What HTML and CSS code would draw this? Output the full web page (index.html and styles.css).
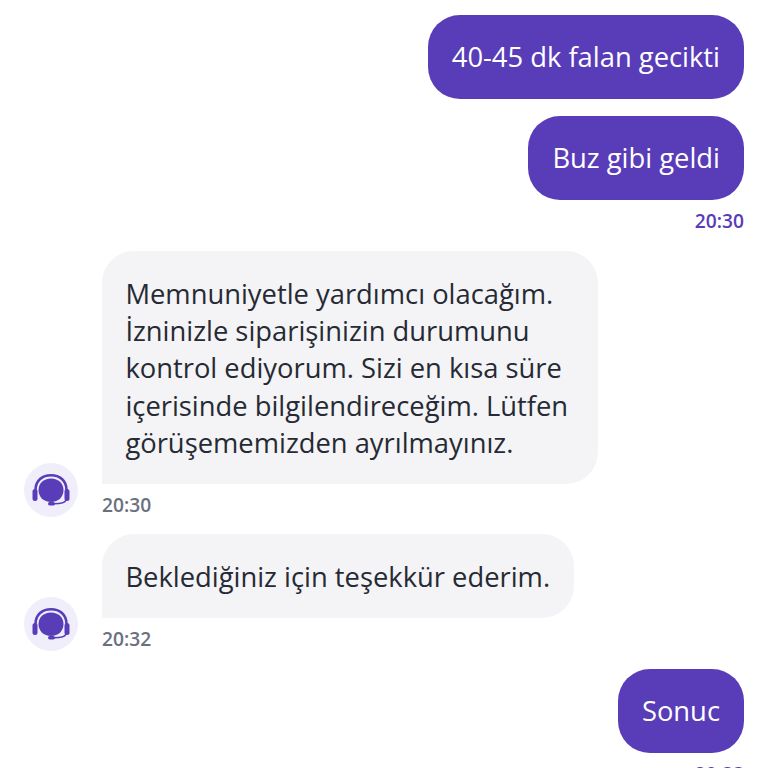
FILE: index.html
```html
<!DOCTYPE html>
<html lang="tr">
<head>
<meta charset="utf-8">
<title>Sohbet</title>
<link rel="stylesheet" href="styles.css">
</head>
<body>
<main class="chat">
  <section class="group group-out first">
    <div class="bubble out">40-45 dk falan gecikti</div>
    <div class="bubble out">Buz gibi geldi</div>
    <div class="time time-out">20:30</div>
  </section>
  <section class="group group-in">
    <div class="avatar">
      <svg viewBox="0 0 40 32" width="40" height="32" aria-hidden="true">
        <path class="band" d="M4.5 16 C4.5 6.5 11.5 1.3 20 1.3 C28.5 1.3 35.5 6.5 35.5 16"/>
        <path class="fill" d="M20 4.5 C12.5 4.5 7.5 9.5 7.5 16 C7.5 23 12.5 28 20 28 C27.5 28 32.5 23 32.5 16 C32.5 9.5 27.5 4.5 20 4.5 Z"/>
        <rect class="fill" x="1.5" y="15" width="5" height="12" rx="2.5"/>
        <rect class="fill" x="33.5" y="15" width="5" height="12" rx="2.5"/>
        <path class="boom" d="M35 26 C34 29 30 29.8 23 29.8"/>
        <rect class="fill" x="17" y="28" width="7" height="3.4" rx="1.7"/>
      </svg>
    </div>
    <div class="stack">
      <div class="bubble in">Memnuniyetle yardımcı olacağım. İzninizle siparişinizin durumunu kontrol ediyorum. Sizi en kısa süre içerisinde bilgilendireceğim. Lütfen görüşememizden ayrılmayınız.</div>
      <div class="time time-in">20:30</div>
    </div>
  </section>
  <section class="group group-in">
    <div class="avatar">
      <svg viewBox="0 0 40 32" width="40" height="32" aria-hidden="true">
        <path class="band" d="M4.5 16 C4.5 6.5 11.5 1.3 20 1.3 C28.5 1.3 35.5 6.5 35.5 16"/>
        <path class="fill" d="M20 4.5 C12.5 4.5 7.5 9.5 7.5 16 C7.5 23 12.5 28 20 28 C27.5 28 32.5 23 32.5 16 C32.5 9.5 27.5 4.5 20 4.5 Z"/>
        <rect class="fill" x="1.5" y="15" width="5" height="12" rx="2.5"/>
        <rect class="fill" x="33.5" y="15" width="5" height="12" rx="2.5"/>
        <path class="boom" d="M35 26 C34 29 30 29.8 23 29.8"/>
        <rect class="fill" x="17" y="28" width="7" height="3.4" rx="1.7"/>
      </svg>
    </div>
    <div class="stack">
      <div class="bubble in">Beklediğiniz için teşekkür ederim.</div>
      <div class="time time-in">20:32</div>
    </div>
  </section>
  <section class="group group-out">
    <div class="bubble out">Sonuc</div>
    <div class="time time-out">20:33</div>
  </section>
</main>
</body>
</html>
```
FILE: styles.css
```css
html, body {
  margin: 0;
  height: 100%;
  overflow: hidden;
  background: #fff;
}
.chat {
  display: flex;
  flex-direction: column;
  gap: 17.5px;
  padding: 15px 24px 0;
  font-family: "Open Sans", "Noto Sans", sans-serif;
}
.group {
  display: flex;
}
.group-out {
  flex-direction: column;
  align-items: flex-end;
  gap: 17px;
}
.group-in {
  align-items: flex-end;
  gap: 24px;
}
.stack {
  display: flex;
  flex-direction: column;
  align-items: flex-start;
  max-width: 496px;
}
.bubble {
  box-sizing: border-box;
  padding: 23.4px 24px;
  font-size: 27.35px;
  line-height: 37.2px;
  border-radius: 32px;
}
.out {
  background: #583cb8;
  color: #fff;
}
.group-out .out:last-of-type {
  border-bottom-right-radius: 0;
}
.in {
  background: #f4f4f6;
  color: #262a34;
  padding: 24px 24px 22.8px 23.4px;
  border-bottom-left-radius: 0;
}
.time {
  font-size: 19.2px;
  line-height: 24px;
  font-weight: 600;
}
.time-out {
  color: #583cb8;
  margin-top: -7.5px;
}
.time-in {
  color: #6b7080;
  margin-top: 9px;
}
.avatar {
  flex: none;
  width: 54px;
  height: 54px;
  border-radius: 50%;
  background: #f1eefc;
  display: flex;
  align-items: center;
  justify-content: center;
}
.fill {
  fill: #583cb8;
}
.band, .boom {
  fill: none;
  stroke: #583cb8;
  stroke-width: 2.6;
}
.boom {
  stroke-width: 1.6;
}
```
